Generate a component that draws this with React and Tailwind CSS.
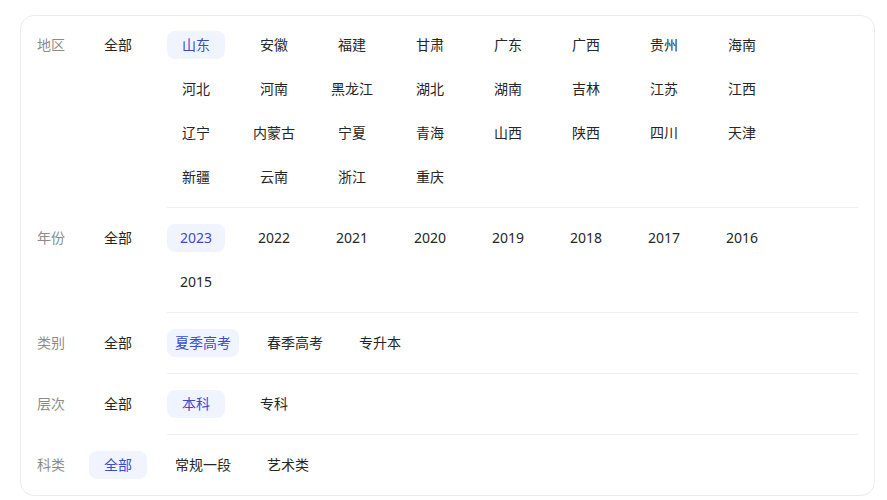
import { useState } from 'react';

const FILTERS = [
  {
    key: 'region',
    label: '地区',
    options: [
      '山东', '安徽', '福建', '甘肃', '广东', '广西', '贵州', '海南',
      '河北', '河南', '黑龙江', '湖北', '湖南', '吉林', '江苏', '江西',
      '辽宁', '内蒙古', '宁夏', '青海', '山西', '陕西', '四川', '天津',
      '新疆', '云南', '浙江', '重庆',
    ],
    initial: '山东',
  },
  {
    key: 'year',
    label: '年份',
    options: ['2023', '2022', '2021', '2020', '2019', '2018', '2017', '2016', '2015'],
    initial: '2023',
  },
  { key: 'type', label: '类别', options: ['夏季高考', '春季高考', '专升本'], initial: '夏季高考' },
  { key: 'level', label: '层次', options: ['本科', '专科'], initial: '本科' },
  { key: 'subject', label: '科类', options: ['常规一段', '艺术类'], initial: 'all' },
];

const Chip = ({ text, active, onClick }) => (
  <button
    onClick={onClick}
    className={`h-7 min-w-[58px] px-2 rounded-lg text-[14px] leading-7 whitespace-nowrap ${
      active ? 'bg-[#f0f4ff] text-[#3c4ad0]' : 'text-[#262626]'
    }`}
  >
    {text}
  </button>
);

export default function App() {
  const [selected, setSelected] = useState(
    Object.fromEntries(FILTERS.map((f) => [f.key, f.initial]))
  );

  const pick = (key, value) => setSelected({ ...selected, [key]: value });

  return (
    <div
      className="pt-[15px] pl-[20px] bg-white min-h-[500px]"
      style={{ fontFamily: '"Noto Sans", "Noto Sans CJK SC", sans-serif' }}
    >
      <div className="w-[855px] border border-[#ececec] rounded-[14px] p-4 pt-[15px]">
        {FILTERS.map((f, i) => {
          const first = i === 0;
          const last = i === FILTERS.length - 1;
          return (
            <div key={f.key} className="flex items-start">
              <div className={`flex items-center gap-5 ${first ? '' : 'pt-4'}`}>
                <div className="w-[52px] h-7 -mr-5 leading-7 text-[14px] text-[#8c8c8c]">{f.label}</div>
                <Chip text="全部" active={selected[f.key] === 'all'} onClick={() => pick(f.key, 'all')} />
              </div>
              <div
                className={`flex-1 ml-5 ${first ? '' : 'pt-4'} ${last ? '' : 'pb-4 border-b border-[#efefef]'}`}
              >
                <div className="flex flex-wrap w-[624px] gap-x-5 gap-y-4">
                  {f.options.map((o) => (
                    <Chip key={o} text={o} active={selected[f.key] === o} onClick={() => pick(f.key, o)} />
                  ))}
                </div>
              </div>
            </div>
          );
        })}
      </div>
    </div>
  );
}
